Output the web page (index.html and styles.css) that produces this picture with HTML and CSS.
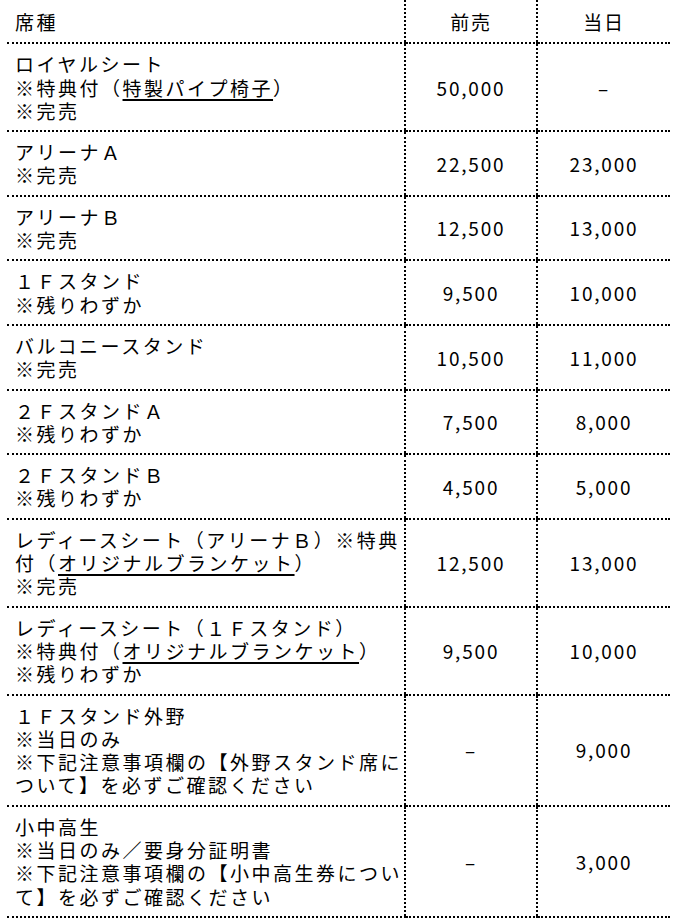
FILE: index.html
```html
<!DOCTYPE html>
<html lang="ja">
<head>
<meta charset="utf-8">
<title>席種</title>
<link rel="stylesheet" href="styles.css">
</head>
<body>
<table class="price-table">
  <colgroup>
    <col class="col-seat">
    <col class="col-pre">
    <col class="col-day">
  </colgroup>
  <thead>
    <tr>
      <th class="seat">席種</th>
      <th class="price">前売</th>
      <th class="price">当日</th>
    </tr>
  </thead>
  <tbody>
    <tr>
      <td class="seat">ロイヤルシート<br>※特典付（<a href="#">特製パイプ椅子</a>）<br>※完売</td>
      <td class="price">50,000</td>
      <td class="price">–</td>
    </tr>
    <tr>
      <td class="seat">アリーナＡ<br>※完売</td>
      <td class="price">22,500</td>
      <td class="price">23,000</td>
    </tr>
    <tr>
      <td class="seat">アリーナＢ<br>※完売</td>
      <td class="price">12,500</td>
      <td class="price">13,000</td>
    </tr>
    <tr>
      <td class="seat">１Ｆスタンド<br>※残りわずか</td>
      <td class="price">9,500</td>
      <td class="price">10,000</td>
    </tr>
    <tr>
      <td class="seat">バルコニースタンド<br>※完売</td>
      <td class="price">10,500</td>
      <td class="price">11,000</td>
    </tr>
    <tr>
      <td class="seat">２ＦスタンドＡ<br>※残りわずか</td>
      <td class="price">7,500</td>
      <td class="price">8,000</td>
    </tr>
    <tr>
      <td class="seat">２ＦスタンドＢ<br>※残りわずか</td>
      <td class="price">4,500</td>
      <td class="price">5,000</td>
    </tr>
    <tr>
      <td class="seat">レディースシート（アリーナＢ）※特典付（<a href="#">オリジナルブランケット</a>）<br>※完売</td>
      <td class="price">12,500</td>
      <td class="price">13,000</td>
    </tr>
    <tr>
      <td class="seat">レディースシート（１Ｆスタンド）<br>※特典付（<a href="#">オリジナルブランケット</a>）<br>※残りわずか</td>
      <td class="price">9,500</td>
      <td class="price">10,000</td>
    </tr>
    <tr>
      <td class="seat">１Ｆスタンド外野<br>※当日のみ<br>※下記注意事項欄の【外野スタンド席について】を必ずご確認ください</td>
      <td class="price">–</td>
      <td class="price">9,000</td>
    </tr>
    <tr>
      <td class="seat">小中高生<br>※当日のみ／要身分証明書<br>※下記注意事項欄の【小中高生券について】を必ずご確認ください</td>
      <td class="price">–</td>
      <td class="price">3,000</td>
    </tr>
  </tbody>
</table>
</body>
</html>
```

FILE: styles.css
```css
html, body {
  background: #ffffff;
}

body {
  margin: 0 0 0 7px;
  font-family: "Noto Sans CJK JP", "Noto Sans", sans-serif;
  font-size: 19px;
  line-height: 23.3px;
  color: #000000;
  letter-spacing: 2.5px;
}

.price-table {
  width: 663px;
  border-collapse: collapse;
  table-layout: fixed;
}

.col-seat { width: 398px; }
.col-pre { width: 132px; }
.col-day { width: 133px; }

.price-table th,
.price-table td {
  padding: 8px 8px;
  border-bottom: 2px dotted #000;
  font-weight: 400;
  vertical-align: middle;
}

.price-table th {
  padding-top: 9.5px;
  padding-bottom: 9.5px;
}

.price-table th + th,
.price-table td + td {
  border-left: 2px dotted #000;
}

.seat {
  text-align: left;
}

.price-table .seat {
  padding-right: 0;
}

.price {
  text-align: center;
  letter-spacing: 1.8px;
}

.price-table a {
  color: #000000;
  text-decoration: underline;
  text-decoration-thickness: 1.5px;
  text-underline-offset: 3px;
}
```
